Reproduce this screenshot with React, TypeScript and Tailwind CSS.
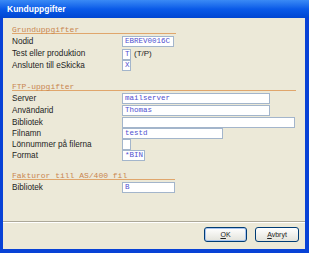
import React from 'react';

const sans = { fontFamily: '"Liberation Sans", Arial, sans-serif' };
const mono = { fontFamily: '"Liberation Mono", "Courier New", monospace' };

function Section({ title, width, className, children }: { title: string; width: string; className: string; children: React.ReactNode }) {
  return (
    <div className={className}>
      <div className={`h-[9px] border-b border-[#e0a66c] text-[8px] leading-[9px] text-[#c98650] ${width}`} style={mono}>
        {title}
      </div>
      <div className="mt-[2px]">{children}</div>
    </div>
  );
}

function Row({ label, h = 'h-[12px]', children }: { label: string; h?: string; children?: React.ReactNode }) {
  return (
    <div className={`flex items-start ${h}`}>
      <div className="w-[110px] text-[8.2px] leading-[11px] text-[#1e1e1e]" style={sans}>
        {label}
      </div>
      <div className="flex items-center gap-[3px]">{children}</div>
    </div>
  );
}

function Field({ value, width }: { value?: string; width: string }) {
  return (
    <div
      className={`h-[11px] ${width} border border-[#a3b5cb] bg-white px-[2px] text-[7.5px] leading-[9px] text-[#5050d0]`}
      style={mono}
    >
      {value}
    </div>
  );
}

export default function App() {
  return (
    <div className="w-[309px] h-[253px] flex flex-col bg-[#0842d6]" style={sans}>
      <div className="h-[18px] shrink-0 bg-linear-to-b from-[#3a8af5] via-[#0a5ae8] to-[#0046d2] flex items-center pl-[7px]">
        <span className="text-[8.5px] font-bold text-white">Kunduppgifter</span>
      </div>
      <div className="flex-1 ml-[3px] mr-[4px] mb-[4px] bg-[#ece9d8] flex flex-col pl-[9px]">
        <Section title="Grunduppgifter" width="w-[164px]" className="mt-[7px]">
          <Row label="Nodid">
            <Field value="EBREV0016C" width="w-[52px]" />
          </Row>
          <Row label="Test eller produktion">
            <Field value="T" width="w-[9px]" />
            <span className="text-[8px] text-[#1e1e1e]">(T/P)</span>
          </Row>
          <Row label="Ansluten till eSkicka">
            <Field value="X" width="w-[9px]" />
          </Row>
        </Section>

        <Section title="FTP-uppgifter" width="w-[284px]" className="mt-[10px]">
          <Row label="Server">
            <Field value="mailserver" width="w-[148px]" />
          </Row>
          <Row label="Användarid">
            <Field value="Thomas" width="w-[148px]" />
          </Row>
          <Row label="Bibliotek" h="h-[11px]">
            <Field width="w-[173px]" />
          </Row>
          <Row label="Filnamn" h="h-[11px]">
            <Field value="testd" width="w-[101px]" />
          </Row>
          <Row label="Lönnummer på filerna" h="h-[11px]">
            <Field width="w-[9px]" />
          </Row>
          <Row label="Format" h="h-[11px]">
            <Field value="*BIN" width="w-[23px]" />
          </Row>
        </Section>

        <Section title="Fakturor till AS/400 fil" width="w-[163px]" className="mt-[10px]">
          <Row label="Bibliotek">
            <Field value="B" width="w-[53px]" />
          </Row>
        </Section>

        <div className="mt-auto -ml-[9px] border-t border-[#aca899] shadow-[0_1px_0_#fff]" />
        <div className="flex justify-end gap-[8px] pr-[6px] pt-[5px] pb-[7px]">
          <button className="w-[43px] h-[15px] rounded-[3px] border border-[#003c74] bg-linear-to-b from-white to-[#e3e3db] shadow-[inset_0_0_0_1px_#a8c4f0] text-[7px] text-[#222] leading-none">
            <span className="underline">O</span>K
          </button>
          <button className="w-[44px] h-[15px] rounded-[3px] border border-[#003c74] bg-linear-to-b from-white to-[#e3e3db] text-[7px] text-[#222] leading-none">
            <span className="underline">A</span>vbryt
          </button>
        </div>
      </div>
    </div>
  );
}
